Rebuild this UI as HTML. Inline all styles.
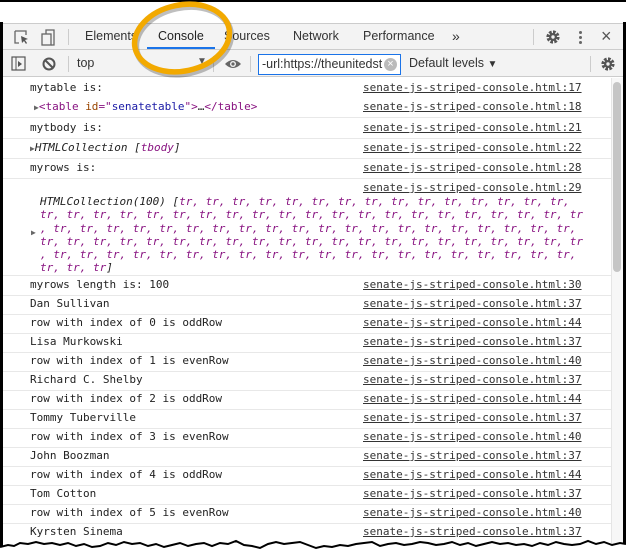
<!DOCTYPE html>
<html><head><meta charset="utf-8"><style>
*{margin:0;padding:0;box-sizing:border-box}
body{width:626px;height:553px;background:#fff;position:relative;overflow:hidden;font-family:"Liberation Sans",sans-serif}
.a{position:absolute}
.m{font-family:"DejaVu Sans Mono","Liberation Mono",monospace;font-size:11px;color:#222;white-space:pre}
.lnk{position:absolute;left:363px;text-decoration:underline;color:#333}
.sep{position:absolute;left:3px;width:608px;height:1px;background:#e8e8e8}
.tb{font-size:12.5px;color:#333}
.p{color:#881280}
.i{font-style:italic}
</style></head><body>
<!-- frame -->
<div class="a" style="left:0;top:0;width:626px;height:2px;background:#000"></div>
<div class="a" style="left:0;top:22px;width:3px;height:531px;background:#000"></div>
<div class="a" style="left:623px;top:22px;width:3px;height:531px;background:#000"></div>
<div class="a" style="left:3px;top:23px;width:620px;height:27px;background:#f3f3f3;border-top:1px solid #ccc;border-bottom:1px solid #ccc"></div>
<div class="a" style="left:3px;top:50px;width:620px;height:27px;background:#f3f3f3;border-bottom:1px solid #ccc"></div>
<!-- toolbar 1 -->
<svg class="a" style="left:13px;top:29px" width="46" height="18" viewBox="0 0 46 18">
<path d="M2 2h11v4M2 2v12h4" fill="none" stroke="#666" stroke-width="1.3"/><path d="M8 7l7 3-3 1 2 3-1 1-2-3-2 2z" fill="#555"/>
<rect x="29" y="5" width="9" height="11" fill="none" stroke="#666" stroke-width="1.3"/><path d="M33 5V1h8v15h-3" fill="none" stroke="#666" stroke-width="1.3"/>
</svg>
<div class="a" style="left:68px;top:29px;width:1px;height:16px;background:#ccc"></div>
<div class="a tb" style="left:85px;top:29px">Elements</div>
<div class="a tb" style="left:158px;top:29px;color:#222">Console</div>
<div class="a" style="left:147px;top:47px;width:68px;height:2px;background:#1a73e8"></div>
<div class="a tb" style="left:224px;top:29px">Sources</div>
<div class="a tb" style="left:293px;top:29px">Network</div>
<div class="a tb" style="left:363px;top:29px">Performance</div>
<div class="a tb" style="left:452px;top:28px;font-size:14px">»</div>
<div class="a" style="left:533px;top:29px;width:1px;height:16px;background:#ccc"></div>
<svg class="a" style="left:545px;top:29px" width="16" height="16" viewBox="0 0 16 16"><circle cx="8" cy="8" r="5" fill="none" stroke="#555" stroke-width="3.2" stroke-dasharray="2.6 1.3"/><circle cx="8" cy="8" r="4" fill="#555"/><circle cx="8" cy="8" r="1.7" fill="#f3f3f3"/></svg>
<div class="a" style="left:579px;top:31px;width:3px;height:3px;border-radius:2px;background:#666;box-shadow:0 5px 0 #666,0 10px 0 #666"></div>
<div class="a" style="left:601px;top:26px;font-size:18px;color:#555">×</div>
<!-- toolbar 2 -->
<svg class="a" style="left:11px;top:56px" width="16" height="16"><rect x="1" y="1" width="13" height="13" fill="none" stroke="#555" stroke-width="1.2"/><line x1="5" y1="1" x2="5" y2="14" stroke="#555"/><path d="M7 5l4 3-4 3z" fill="#555"/></svg>
<svg class="a" style="left:41px;top:56px" width="16" height="16"><circle cx="8" cy="8" r="5.5" fill="none" stroke="#555" stroke-width="2"/><line x1="4" y1="4" x2="12" y2="12" stroke="#555" stroke-width="2"/></svg>
<div class="a" style="left:68px;top:56px;width:1px;height:16px;background:#ccc"></div>
<div class="a tb" style="left:77px;top:56px">top</div>
<div class="a" style="left:197px;top:56px;font-size:10px;color:#555">▼</div>
<div class="a" style="left:213px;top:56px;width:1px;height:16px;background:#ccc"></div>
<svg class="a" style="left:224px;top:57px" width="18" height="14"><path d="M1 7Q9 -1 17 7Q9 15 1 7z" fill="#666"/><circle cx="9" cy="7" r="3" fill="#f3f3f3"/><circle cx="9" cy="7" r="1.6" fill="#666"/></svg>
<div class="a" style="left:250px;top:56px;width:1px;height:16px;background:#ccc"></div>
<div class="a" style="left:258px;top:54px;width:143px;height:21px;border:1px solid #1a73e8;background:#fff;overflow:hidden"><div class="tb" style="position:absolute;left:3px;top:2px;white-space:nowrap">-url:https://theunitedst</div><div style="position:absolute;right:3px;top:3px;width:13px;height:13px;border-radius:7px;background:#bbb;color:#fff;font-size:11px;line-height:13px;text-align:center">×</div></div>
<div class="a tb" style="left:409px;top:56px">Default levels <span style="font-size:10px">▼</span></div>
<div class="a" style="left:590px;top:56px;width:1px;height:16px;background:#ccc"></div>
<svg class="a" style="left:600px;top:56px" width="16" height="16" viewBox="0 0 16 16"><circle cx="8" cy="8" r="5" fill="none" stroke="#555" stroke-width="3.2" stroke-dasharray="2.6 1.3"/><circle cx="8" cy="8" r="4" fill="#555"/><circle cx="8" cy="8" r="1.7" fill="#f3f3f3"/></svg>
<!-- scrollbar -->
<div class="a" style="left:611px;top:78px;width:12px;height:475px;background:#f7f7f7;border-left:1px solid #e5e5e5"></div>
<div class="a" style="left:613px;top:82px;width:8px;height:190px;border-radius:4px;background:#c5c5c5"></div>
<!-- console -->
<div class="a m" style="left:30px;top:81px">mytable is:</div><div class="lnk m" style="top:81px">senate-js-striped-console.html:17</div>
<div class="a m" style="left:34px;top:100px"><span style="font-size:8px;color:#666">▶</span><span style="color:#881280">&lt;table </span><span style="color:#994500">id</span><span style="color:#881280">="</span><span style="color:#1a1aa6">senatetable</span><span style="color:#881280">"&gt;</span>…<span style="color:#881280">&lt;/table&gt;</span></div><div class="lnk m" style="top:100px">senate-js-striped-console.html:18</div>
<div class="sep" style="top:117px"></div>
<div class="a m" style="left:30px;top:121px">mytbody is:</div><div class="lnk m" style="top:121px">senate-js-striped-console.html:21</div>
<div class="sep" style="top:138px"></div>
<div class="a m" style="left:30px;top:141px"><span style="font-size:8px;color:#666">▶</span><span class="i">HTMLCollection [<span class="p">tbody</span>]</span></div><div class="lnk m" style="top:141px">senate-js-striped-console.html:22</div>
<div class="sep" style="top:158px"></div>
<div class="a m" style="left:30px;top:161px">myrows is:</div><div class="lnk m" style="top:161px">senate-js-striped-console.html:28</div>
<div class="sep" style="top:178px"></div>
<div class="lnk m" style="top:181px">senate-js-striped-console.html:29</div>
<div class="a m" style="left:31px;top:228px;font-size:8px;color:#666">▶</div>
<div class="a m i" style="left:40px;top:195px;line-height:13.3px">HTMLCollection(100) [<span class="p">tr, tr, tr, tr, tr, tr, tr, tr, tr, tr, tr, tr, tr, tr, tr,</span>
<span class="p">tr, tr, tr, tr, tr, tr, tr, tr, tr, tr, tr, tr, tr, tr, tr, tr, tr, tr, tr, tr, tr</span>
<span class="p">, tr, tr, tr, tr, tr, tr, tr, tr, tr, tr, tr, tr, tr, tr, tr, tr, tr, tr, tr, tr,</span>
<span class="p">tr, tr, tr, tr, tr, tr, tr, tr, tr, tr, tr, tr, tr, tr, tr, tr, tr, tr, tr, tr, tr</span>
<span class="p">, tr, tr, tr, tr, tr, tr, tr, tr, tr, tr, tr, tr, tr, tr, tr, tr, tr, tr, tr, tr,</span>
<span class="p">tr, tr, tr</span>]</div>
<div class="sep" style="top:275px"></div>
<div class="a m" style="left:30px;top:278px">myrows length is: 100</div><div class="lnk m" style="top:278px">senate-js-striped-console.html:30</div>
<div class="sep" style="top:295px"></div>
<div class="a m" style="left:30px;top:297px">Dan Sullivan</div><div class="lnk m" style="top:297px">senate-js-striped-console.html:37</div>
<div class="sep" style="top:314px"></div>
<div class="a m" style="left:30px;top:316px">row with index of 0 is oddRow</div><div class="lnk m" style="top:316px">senate-js-striped-console.html:44</div>
<div class="sep" style="top:333px"></div>
<div class="a m" style="left:30px;top:335px">Lisa Murkowski</div><div class="lnk m" style="top:335px">senate-js-striped-console.html:37</div>
<div class="sep" style="top:352px"></div>
<div class="a m" style="left:30px;top:354px">row with index of 1 is evenRow</div><div class="lnk m" style="top:354px">senate-js-striped-console.html:40</div>
<div class="sep" style="top:371px"></div>
<div class="a m" style="left:30px;top:373px">Richard C. Shelby</div><div class="lnk m" style="top:373px">senate-js-striped-console.html:37</div>
<div class="sep" style="top:390px"></div>
<div class="a m" style="left:30px;top:392px">row with index of 2 is oddRow</div><div class="lnk m" style="top:392px">senate-js-striped-console.html:44</div>
<div class="sep" style="top:409px"></div>
<div class="a m" style="left:30px;top:411px">Tommy Tuberville</div><div class="lnk m" style="top:411px">senate-js-striped-console.html:37</div>
<div class="sep" style="top:428px"></div>
<div class="a m" style="left:30px;top:430px">row with index of 3 is evenRow</div><div class="lnk m" style="top:430px">senate-js-striped-console.html:40</div>
<div class="sep" style="top:447px"></div>
<div class="a m" style="left:30px;top:449px">John Boozman</div><div class="lnk m" style="top:449px">senate-js-striped-console.html:37</div>
<div class="sep" style="top:466px"></div>
<div class="a m" style="left:30px;top:468px">row with index of 4 is oddRow</div><div class="lnk m" style="top:468px">senate-js-striped-console.html:44</div>
<div class="sep" style="top:485px"></div>
<div class="a m" style="left:30px;top:487px">Tom Cotton</div><div class="lnk m" style="top:487px">senate-js-striped-console.html:37</div>
<div class="sep" style="top:504px"></div>
<div class="a m" style="left:30px;top:506px">row with index of 5 is evenRow</div><div class="lnk m" style="top:506px">senate-js-striped-console.html:40</div>
<div class="sep" style="top:523px"></div>
<div class="a m" style="left:30px;top:525px">Kyrsten Sinema</div><div class="lnk m" style="top:525px">senate-js-striped-console.html:37</div>
<!-- torn edge -->
<svg class="a" style="left:0;top:538px" width="626" height="15" viewBox="0 0 626 15">
<path d="M0 9L8 7 14 8 20 5 28 6 36 4 44 6 52 5 60 7 68 5 76 8 84 6 92 9 100 8 108 5 116 7 124 4 132 6 140 5 148 8 156 6 164 9 172 7 180 5 188 8 196 6 204 5 212 8 220 5 228 6 236 3 244 7 252 8 260 10 268 6 276 4 284 6 292 5 300 4 308 7 316 10 324 8 332 9 340 7 348 8 356 6 364 5 372 4 380 8 388 6 396 5 404 7 412 6 420 4 428 5 436 7 444 6 452 4 460 7 468 5 476 8 484 6 492 4 500 6 508 5 516 7 524 6 532 8 540 5 548 7 556 4 564 6 572 7 580 6 588 3 596 6 604 4 612 7 620 5 626 6V15H0z" fill="#fff"/>
<path d="M0 9L8 7 14 8 20 5 28 6 36 4 44 6 52 5 60 7 68 5 76 8 84 6 92 9 100 8 108 5 116 7 124 4 132 6 140 5 148 8 156 6 164 9 172 7 180 5 188 8 196 6 204 5 212 8 220 5 228 6 236 3 244 7 252 8 260 10 268 6 276 4 284 6 292 5 300 4 308 7 316 10 324 8 332 9 340 7 348 8 356 6 364 5 372 4 380 8 388 6 396 5 404 7 412 6 420 4 428 5 436 7 444 6 452 4 460 7 468 5 476 8 484 6 492 4 500 6 508 5 516 7 524 6 532 8 540 5 548 7 556 4 564 6 572 7 580 6 588 3 596 6 604 4 612 7 620 5 626 6" fill="none" stroke="#000" stroke-width="2"/>
</svg>
<!-- orange highlight -->
<svg class="a" style="left:120px;top:0" width="130" height="85"><g transform="rotate(-12 62 38)"><ellipse cx="63" cy="41" rx="48" ry="33" fill="none" stroke="rgba(0,0,0,0.25)" stroke-width="6"/><ellipse cx="62" cy="38" rx="48" ry="33" fill="none" stroke="#f2a900" stroke-width="5.5"/></g></svg>
</body></html>
